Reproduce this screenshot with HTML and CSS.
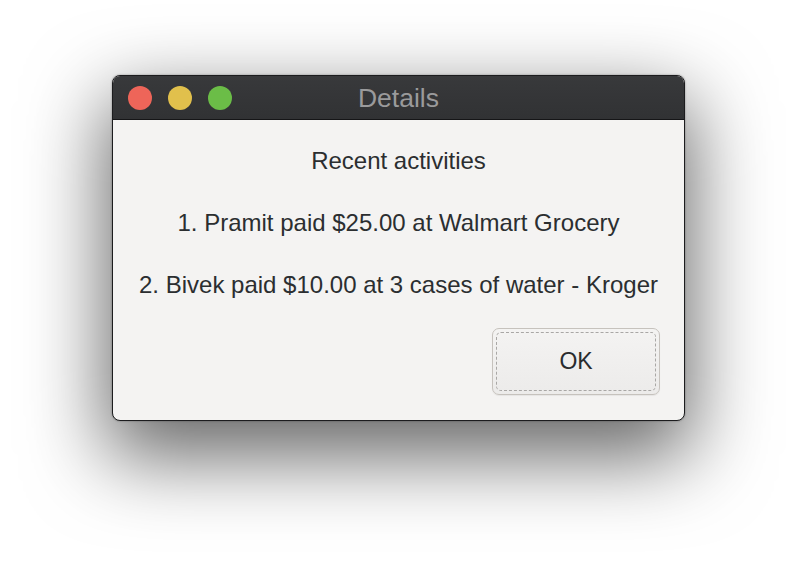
FILE: index.html
```html
<!DOCTYPE html>
<html>
<head>
<meta charset="utf-8">
<link rel="stylesheet" href="styles.css">
</head>
<body>
<div class="stage">
  <div class="window">
    <div class="titlebar">
      <div class="lights">
        <span class="light red"></span>
        <span class="light yellow"></span>
        <span class="light green"></span>
      </div>
      <div class="title">Details</div>
    </div>
    <div class="content">
      <div class="lines">
        <p class="line">Recent activities</p>
        <p class="line">1. Pramit paid $25.00 at Walmart Grocery</p>
        <p class="line">2. Bivek paid $10.00 at 3 cases of water - Kroger</p>
      </div>
      <div class="actions">
        <button class="btn"><span class="btn-inner">OK</span></button>
      </div>
    </div>
  </div>
</div>
</body>
</html>
```
FILE: styles.css
```css
html, body {
  margin: 0;
  padding: 0;
  background: #ffffff;
}
.stage {
  width: 796px;
  height: 568px;
  padding: 75px 0 0 112px;
  box-sizing: border-box;
  font-family: "Liberation Sans", Arial, sans-serif;
}
.window {
  width: 573px;
  height: 346px;
  box-sizing: border-box;
  border: 1px solid #1c1c1e;
  border-radius: 8px;
  background: #f4f3f2;
  box-shadow: 0 30px 80px 6px rgba(0,0,0,0.6), 0 0 2px rgba(0,0,0,0.4);
  display: flex;
  flex-direction: column;
  overflow: hidden;
}
.titlebar {
  position: relative;
  height: 43px;
  flex: 0 0 43px;
  background: linear-gradient(#38393b, #313234);
  border-bottom: 1px solid #151517;
  display: flex;
  align-items: center;
  padding-left: 15px;
}
.lights {
  display: flex;
  gap: 16px;
  position: relative;
  z-index: 1;
}
.light {
  width: 24px;
  height: 24px;
  border-radius: 50%;
  display: block;
}
.red { background: #ee6559; }
.yellow { background: #e1c04c; }
.green { background: #6bbd47; }
.title {
  position: absolute;
  left: 0;
  right: 0;
  top: 0;
  bottom: 0;
  display: flex;
  align-items: center;
  justify-content: center;
  color: #9a9a9b;
  font-size: 26.5px;
  padding-top: 1px;
}
.content {
  flex: 1;
  display: flex;
  flex-direction: column;
  padding: 27px 24px 0 0;
}
.lines {
  display: flex;
  flex-direction: column;
  gap: 34px;
  padding-left: 24px;
}
.line {
  margin: 0;
  text-align: center;
  font-size: 24px;
  line-height: 28px;
  color: #2b2e30;
}
.actions {
  display: flex;
  justify-content: flex-end;
  margin-top: 29px;
}
.btn {
  width: 168px;
  height: 67px;
  padding: 3px;
  box-sizing: border-box;
  border: 1px solid #c6c2bd;
  border-radius: 7px;
  background: linear-gradient(#f4f3f2, #ecebea);
  box-shadow: 0 1px 1px rgba(0,0,0,0.06);
  font-family: "Liberation Sans", Arial, sans-serif;
  font-size: 23px;
  color: #2a2c2e;
}
.btn-inner {
  display: flex;
  align-items: center;
  justify-content: center;
  width: 100%;
  height: 100%;
  box-sizing: border-box;
  border: 1.5px dashed #a9a7a5;
  border-radius: 5px;
}
```
